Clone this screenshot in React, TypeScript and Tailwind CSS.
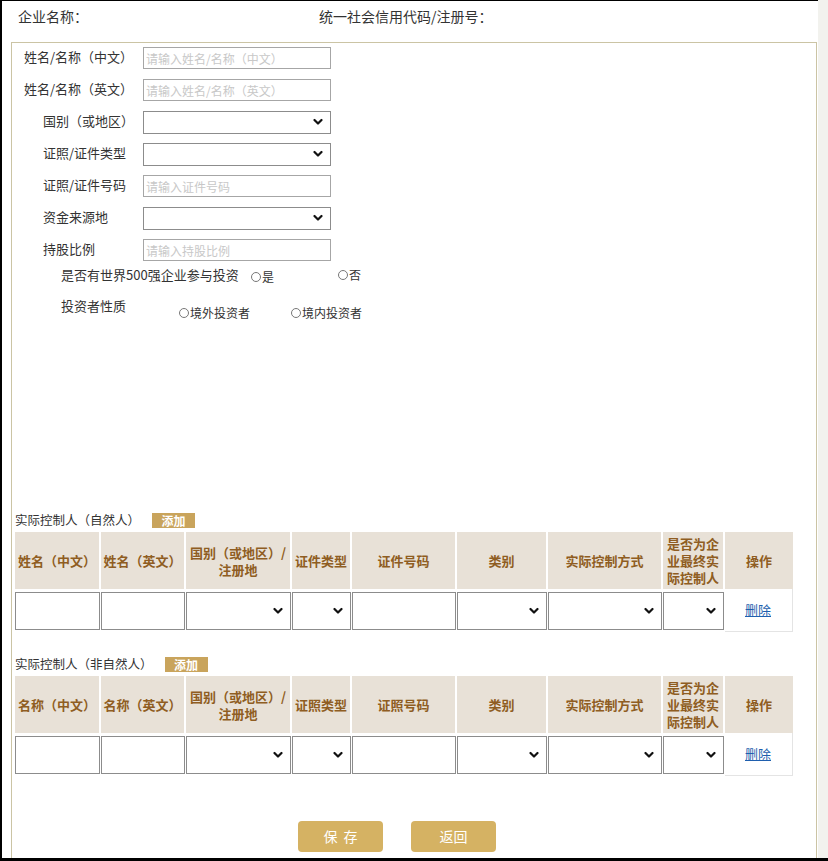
import React from 'react';

const FONT = { fontFamily: '"Noto Sans CJK SC", "Noto Sans", sans-serif' };

function Chevron() {
  return (
    <svg width="10" height="7" viewBox="0 0 10 7" className="pointer-events-none absolute right-[8px] top-1/2 -translate-y-1/2">
      <path d="M1.5 1.5 L5 5 L8.5 1.5" fill="none" stroke="#111" strokeWidth="2.2" strokeLinecap="round" strokeLinejoin="round" />
    </svg>
  );
}

function SelectBox({ className }: { className: string }) {
  return (
    <div className={'relative ' + className}>
      <select className="h-full w-full appearance-none border border-[#8c8c8c] bg-white outline-none" defaultValue="">
        <option value=""></option>
      </select>
      <Chevron />
    </div>
  );
}

function Radio({ label }: { label: string }) {
  return (
    <span className="inline-flex items-center text-[12px] leading-[16px] text-[#333]">
      <span className="mr-[1px] inline-block h-[10px] w-[10px] rounded-full border border-[#777] bg-white"></span>
      {label}
    </span>
  );
}

const formRows: { label: string; pl: string; type: 'input' | 'select'; ph?: string }[] = [
  { label: '姓名/名称（中文）', pl: 'pl-[12px]', type: 'input', ph: '请输入姓名/名称（中文）' },
  { label: '姓名/名称（英文）', pl: 'pl-[12px]', type: 'input', ph: '请输入姓名/名称（英文）' },
  { label: '国别（或地区）', pl: 'pl-[31px]', type: 'select' },
  { label: '证照/证件类型', pl: 'pl-[31px]', type: 'select' },
  { label: '证照/证件号码', pl: 'pl-[31px]', type: 'input', ph: '请输入证件号码' },
  { label: '资金来源地', pl: 'pl-[31px]', type: 'select' },
  { label: '持股比例', pl: 'pl-[31px]', type: 'input', ph: '请输入持股比例' },
];

const colWidths = ['w-[86px]', 'w-[85px]', 'w-[106px]', 'w-[60px]', 'w-[105px]', 'w-[91px]', 'w-[115px]', 'w-[62px]', 'w-[68px]'];
const colTypes: ('input' | 'select' | 'del')[] = ['input', 'input', 'select', 'select', 'input', 'select', 'select', 'select', 'del'];

function ControllerTable({ title, headers }: { title: string; headers: string[][] }) {
  return (
    <div className="ml-[3px]">
      <div className="mb-[2px] flex h-[20px] items-center">
        <span className="text-[12.5px] leading-[20px] text-[#333]">{title}</span>
        <span className="ml-[12px] flex h-[15px] w-[43px] items-center justify-center bg-[#c9a45c] text-[12px] font-bold leading-[15px] text-white">添加</span>
      </div>
      <div className="flex h-[57px] w-[778px] bg-[#e8e1d7]">
        {headers.map((lines, i) => (
          <div
            key={i}
            className={colWidths[i] + ' flex flex-col items-center justify-center border-r-2 border-white text-center text-[13px] font-bold leading-[17px] text-[#8f5d22] last:border-r-0'}
          >
            {lines.map((l, j) => (
              <span key={j} className="whitespace-nowrap">{l}</span>
            ))}
          </div>
        ))}
      </div>
      <div className="flex h-[43px] w-[778px]">
        {colTypes.map((t, i) => (
          <div key={i} className={colWidths[i] + ' flex items-center py-[2px] pr-[1px] ' + (t === 'del' ? 'justify-center border-b border-r border-[#e4e4e4]' : '')}>
            {t === 'input' && <input className="h-[38px] w-full border border-[#8c8c8c] bg-white outline-none" />}
            {t === 'select' && <SelectBox className="h-[38px] w-full" />}
            {t === 'del' && <span className="text-[13px] leading-[16px] text-[#1f5fae] underline">删除</span>}
          </div>
        ))}
      </div>
    </div>
  );
}

export default function App() {
  return (
    <div className="flex h-[861px] w-[828px] flex-col overflow-hidden bg-white" style={FONT}>
      <div className="flex min-h-0 flex-1">
        <div className="flex w-[818px] flex-col border-l-2 border-t border-black">
          <div className="flex h-[41px] shrink-0 pl-[16px] pt-[5px] text-[14px] leading-[20px] text-[#333]">
            <span className="w-[301px]">企业名称：</span>
            <span>统一社会信用代码/注册号：</span>
          </div>
          <div className="ml-[9px] flex min-h-0 w-[806px] flex-1 flex-col overflow-hidden border-l border-r border-t border-[#cbc4a4]">
            <div className="-mt-[1px] flex flex-col">
              {formRows.map((r, i) => (
                <div key={i} className="flex h-[32px] shrink-0 items-center">
                  <div className={'w-[131px] -translate-y-[1px] text-[13px] leading-[18px] text-[#333] ' + r.pl}>{r.label}</div>
                  {r.type === 'input' ? (
                    <input
                      placeholder={r.ph}
                      className="h-[22px] w-[188px] border border-[#a6a6a6] bg-white px-[2px] text-[12px] outline-none placeholder:text-[#c8c8c8]"
                    />
                  ) : (
                    <SelectBox className="h-[23px] w-[188px]" />
                  )}
                </div>
              ))}
            </div>
            <div className="flex h-[18px] shrink-0 items-center pl-[49px]">
              <span className="w-[190px] text-[13px] leading-[18px] text-[#333]">是否有世界500强企业参与投资</span>
              <span className="w-[87px]"><Radio label="是" /></span>
              <Radio label="否" />
            </div>
            <div className="mt-[13px] flex h-[20px] shrink-0 items-start pl-[49px]">
              <span className="w-[118px] text-[13px] leading-[18px] text-[#333]">投资者性质</span>
              <span className="w-[112px] pt-[2px]"><Radio label="境外投资者" /></span>
              <span className="pt-[2px]"><Radio label="境内投资者" /></span>
            </div>
            <div className="mt-[193px]">
              <ControllerTable
                title="实际控制人（自然人）"
                headers={[['姓名（中文）'], ['姓名（英文）'], ['国别（或地区）/', '注册地'], ['证件类型'], ['证件号码'], ['类别'], ['实际控制方式'], ['是否为企', '业最终实', '际控制人'], ['操作']]}
              />
            </div>
            <div className="mt-[22px]">
              <ControllerTable
                title="实际控制人（非自然人）"
                headers={[['名称（中文）'], ['名称（英文）'], ['国别（或地区）/', '注册地'], ['证照类型'], ['证照号码'], ['类别'], ['实际控制方式'], ['是否为企', '业最终实', '际控制人'], ['操作']]}
              />
            </div>
            <div className="ml-[286px] mt-[45px] flex gap-[28px]">
              <button className="flex h-[31px] w-[85px] items-center justify-center gap-[6px] rounded-[4px] bg-[#d5b263] text-[14px] text-white">
                <span>保</span>
                <span>存</span>
              </button>
              <button className="h-[31px] w-[85px] rounded-[4px] bg-[#d5b263] text-[14px] text-white">返回</button>
            </div>
          </div>
        </div>
        <div className="w-[10px] bg-[#f2f2ee]"></div>
      </div>
      <div className="h-[3px] shrink-0 bg-black"></div>
    </div>
  );
}
